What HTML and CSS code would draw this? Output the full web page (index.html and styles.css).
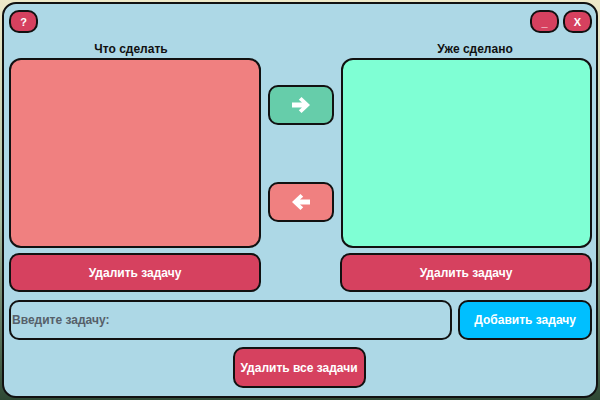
FILE: index.html
```html
<!DOCTYPE html>
<html lang="ru">
  <head>
    <meta charset="UTF-8" />
    <meta name="viewport" content="width=device-width, initial-scale=1.0" />
    <title>Список задач</title>
    <link rel="stylesheet" href="styles.css">
  </head>

  <body>
    <div class="window">
      <div class="topbar">
        <button class="btn small">?</button>
        <div class="controls">
          <button class="btn small">_</button>
          <button class="btn small">X</button>
        </div>
      </div>

      <div class="titles">
        <h3 class="title-left">Что сделать</h3>
        <h3 class="title-right">Уже сделано</h3>
      </div>

      <div class="lists">
        <div class="list todo"></div>
        <div class="arrows">
          <button class="arrow to-done">
            <svg width="22" height="18" viewBox="0 0 22 18">
              <path d="M11.5 1 L20 9 L11.5 17 L8.8 14.3 L12 11.4 H2 V6.6 H12 L8.8 3.7 Z" fill="#fff" />
            </svg>
          </button>
          <button class="arrow to-todo">
            <svg width="22" height="18" viewBox="0 0 22 18">
              <path d="M10.5 1 L2 9 L10.5 17 L13.2 14.3 L10 11.4 H20 V6.6 H10 L13.2 3.7 Z" fill="#fff" />
            </svg>
          </button>
        </div>
        <div class="list done"></div>
      </div>

      <div class="deletes">
        <button class="btn wide">Удалить задачу</button>
        <div></div>
        <button class="btn wide">Удалить задачу</button>
      </div>

      <div class="add-row">
        <input class="task-input" type="text" placeholder="Введите задачу:">
        <button class="btn add">Добавить задачу</button>
      </div>

      <div class="bottom">
        <button class="btn clear">Удалить все задачи</button>
      </div>
    </div>
  </body>
</html>
```

FILE: styles.css
```css
* {
  box-sizing: border-box;
  margin: 0;
  padding: 0;
  font-family: "Liberation Sans", Arial, sans-serif;
  font-weight: bold;
}

body {
  width: 600px;
  height: 400px;
  padding: 2px;
  background: linear-gradient(#eee9c9, #a9bfa4 55%, #2e4934);
  overflow: hidden;
}

.window {
  width: 596px;
  height: 396px;
  padding: 6px 4px 0 5px;
  border: 2px solid #111;
  border-radius: 14px;
  background-color: lightblue;
}

.btn {
  border: 2px solid #111;
  border-radius: 10px;
  background-color: #d6415f;
  color: #fff;
  font-size: 12px;
}

.topbar {
  display: flex;
  justify-content: space-between;
  height: 23px;
}

.controls {
  display: flex;
  gap: 4px;
}

.small {
  width: 29px;
  height: 23px;
  font-size: 11px;
}

.titles {
  display: grid;
  grid-template-columns: 252px 80px 251px;
  margin-top: 6px;
  height: 19px;
  color: #111;
}

.titles h3 {
  font-size: 12px;
  line-height: 14px;
  margin-top: 3px;
  text-align: center;
}

.title-left {
  padding-right: 8px;
}

.title-right {
  grid-column: 3;
  padding-left: 17px;
}

.lists {
  display: grid;
  grid-template-columns: 252px 80px 251px;
  height: 190px;
}

.list {
  border: 2px solid #111;
  border-radius: 12px;
}

.todo {
  background-color: lightcoral;
}

.done {
  background-color: aquamarine;
}

.arrows {
  display: flex;
  flex-direction: column;
  justify-content: space-between;
  align-items: center;
  padding: 27px 0 26px;
}

.arrow {
  width: 66px;
  height: 40px;
  border: 2px solid #111;
  border-radius: 10px;
  display: flex;
  align-items: center;
  justify-content: center;
}

.to-done {
  background-color: mediumaquamarine;
}

.to-todo {
  background-color: lightcoral;
}

.deletes {
  display: grid;
  grid-template-columns: 252px 79px 252px;
  margin-top: 5px;
}

.wide {
  height: 39px;
}

.add-row {
  display: flex;
  gap: 6px;
  margin-top: 8px;
}

.task-input {
  width: 444px;
  height: 40px;
  border: 2px solid #111;
  border-radius: 10px;
  background-color: lightblue;
  padding-left: 1px;
  font-size: 12px;
  color: #333;
  outline: none;
}

.task-input::placeholder {
  color: #56606a;
}

.add {
  width: 134px;
  height: 40px;
  background-color: deepskyblue;
}

.bottom {
  display: flex;
  justify-content: center;
  margin-top: 7px;
  padding-right: 3px;
}

.clear {
  width: 133px;
  height: 41px;
}
```
